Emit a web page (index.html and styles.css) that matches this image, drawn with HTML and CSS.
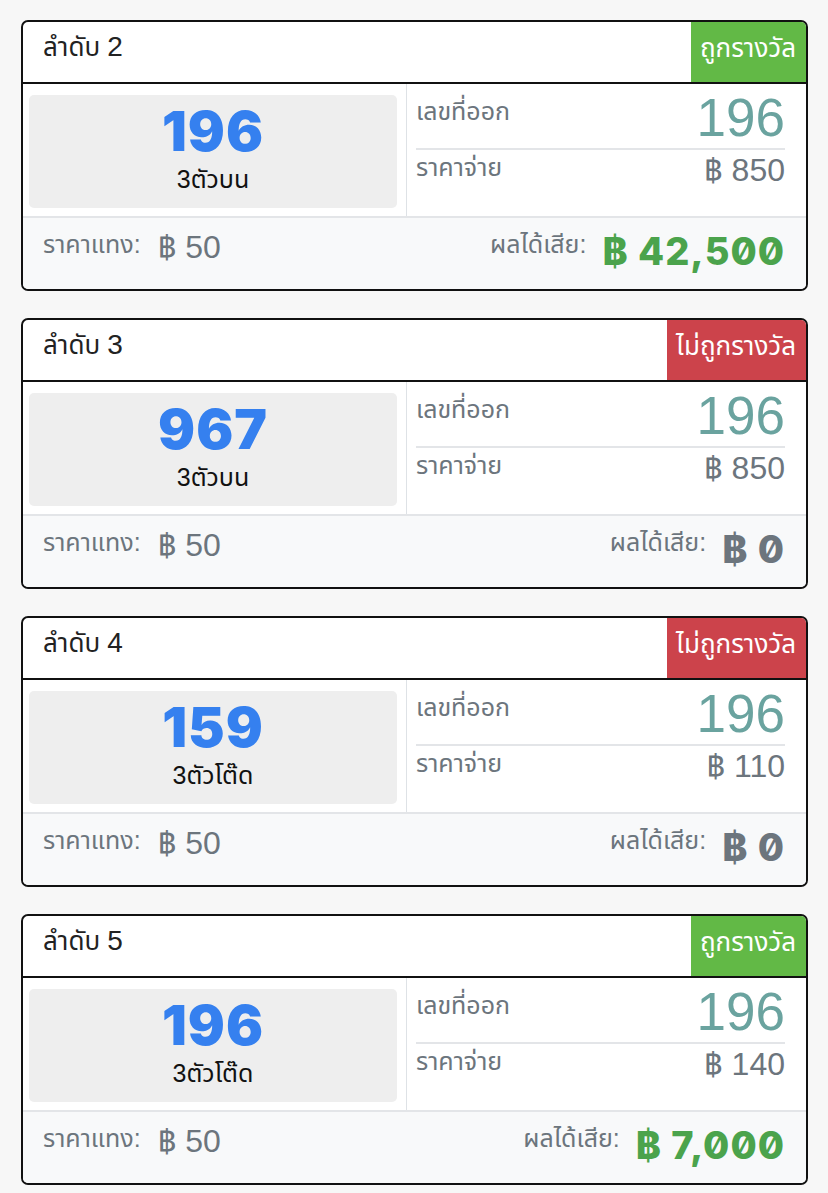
FILE: index.html
```html
<!DOCTYPE html>
<html lang="th">
<head>
    <meta charset="UTF-8">
    <meta name="viewport" content="width=device-width, initial-scale=1.0">
    <title>ผลการแทง</title>
    <link rel="stylesheet" href="styles.css">
</head>
<body>
    <div class="list">
        <div class="bet">
            <div class="bet-head">
                <div class="bet-no">ลำดับ <span class="seq">2</span></div>
                <div class="badge win">ถูกรางวัล</div>
            </div>
            <div class="bet-body">
                <div class="pick">
                    <div class="pick-box">
                        <div class="pick-num">196</div>
                        <div class="pick-type">3ตัวบน</div>
                    </div>
                </div>
                <div class="info">
                    <div class="info-row result">
                        <span class="label">เลขที่ออก</span>
                        <span class="result-num">196</span>
                    </div>
                    <div class="info-row">
                        <span class="label">ราคาจ่าย</span>
                        <span class="money">฿ 850</span>
                    </div>
                </div>
            </div>
            <div class="bet-foot">
                <div class="stake"><span class="label">ราคาแทง:</span><span class="money">฿ 50</span></div>
                <div class="profit"><span class="label">ผลได้เสีย:</span><span class="profit-num plus">฿ 42,500</span></div>
            </div>
        </div>

        <div class="bet">
            <div class="bet-head">
                <div class="bet-no">ลำดับ <span class="seq">3</span></div>
                <div class="badge lose">ไม่ถูกรางวัล</div>
            </div>
            <div class="bet-body">
                <div class="pick">
                    <div class="pick-box">
                        <div class="pick-num">967</div>
                        <div class="pick-type">3ตัวบน</div>
                    </div>
                </div>
                <div class="info">
                    <div class="info-row result">
                        <span class="label">เลขที่ออก</span>
                        <span class="result-num">196</span>
                    </div>
                    <div class="info-row">
                        <span class="label">ราคาจ่าย</span>
                        <span class="money">฿ 850</span>
                    </div>
                </div>
            </div>
            <div class="bet-foot">
                <div class="stake"><span class="label">ราคาแทง:</span><span class="money">฿ 50</span></div>
                <div class="profit"><span class="label">ผลได้เสีย:</span><span class="profit-num">฿ 0</span></div>
            </div>
        </div>

        <div class="bet">
            <div class="bet-head">
                <div class="bet-no">ลำดับ <span class="seq">4</span></div>
                <div class="badge lose">ไม่ถูกรางวัล</div>
            </div>
            <div class="bet-body">
                <div class="pick">
                    <div class="pick-box">
                        <div class="pick-num">159</div>
                        <div class="pick-type">3ตัวโต๊ด</div>
                    </div>
                </div>
                <div class="info">
                    <div class="info-row result">
                        <span class="label">เลขที่ออก</span>
                        <span class="result-num">196</span>
                    </div>
                    <div class="info-row">
                        <span class="label">ราคาจ่าย</span>
                        <span class="money">฿ 110</span>
                    </div>
                </div>
            </div>
            <div class="bet-foot">
                <div class="stake"><span class="label">ราคาแทง:</span><span class="money">฿ 50</span></div>
                <div class="profit"><span class="label">ผลได้เสีย:</span><span class="profit-num">฿ 0</span></div>
            </div>
        </div>

        <div class="bet">
            <div class="bet-head">
                <div class="bet-no">ลำดับ <span class="seq">5</span></div>
                <div class="badge win">ถูกรางวัล</div>
            </div>
            <div class="bet-body">
                <div class="pick">
                    <div class="pick-box">
                        <div class="pick-num">196</div>
                        <div class="pick-type">3ตัวโต๊ด</div>
                    </div>
                </div>
                <div class="info">
                    <div class="info-row result">
                        <span class="label">เลขที่ออก</span>
                        <span class="result-num">196</span>
                    </div>
                    <div class="info-row">
                        <span class="label">ราคาจ่าย</span>
                        <span class="money">฿ 140</span>
                    </div>
                </div>
            </div>
            <div class="bet-foot">
                <div class="stake"><span class="label">ราคาแทง:</span><span class="money">฿ 50</span></div>
                <div class="profit"><span class="label">ผลได้เสีย:</span><span class="profit-num plus">฿ 7,000</span></div>
            </div>
        </div>
    </div>
</body>
</html>
```

FILE: styles.css
```css
body {
    font-family: "Liberation Sans", "Noto Sans Thai", "Noto Sans Thai UI", Kanit, Sarabun, "Noto Sans", sans-serif;
    background-color: #f7f7f7;
    color: #212529;
    margin: 0;
    padding: 20px 20px 0 21px;
}

.bet {
    background-color: #fff;
    border: 2px solid #111;
    border-radius: 7px;
    overflow: hidden;
    margin-bottom: 27px;
}

/* หัวการ์ด: ลำดับ + ป้ายผล */
.bet-head {
    display: flex;
    justify-content: space-between;
    height: 60px;
    border-bottom: 2px solid #111;
}

.bet-no {
    font-size: 26px;
    line-height: 34px;
    padding: 8px 20px 0 20px;
    color: #222;
}

.bet-no .seq {
    font-size: 28px;
}

.badge {
    color: #fff;
    font-size: 26px;
    line-height: 34px;
    padding: 9px 10px 0 9px;
}

.badge.win {
    background-color: #62b946;
}

.badge.lose {
    background-color: #cc434b;
}

.bet-body {
    display: flex;
    height: 132px;
}

.pick {
    width: 384px;
    padding: 11px 9px 8px 6px;
    box-sizing: border-box;
    border-right: 1px solid #dee2e6;
}

.pick-box {
    background-color: #eee;
    border-radius: 5px;
    height: 100%;
    text-align: center;
    padding-top: 6px;
    box-sizing: border-box;
}

.pick-num {
    font-family: Inter, sans-serif;
    font-weight: 900;
    font-size: 55px;
    line-height: 61px;
    letter-spacing: 1px;
    color: #3580ef;
}

.pick-type {
    font-size: 25px;
    line-height: 34px;
    color: #111;
}

.info {
    flex: 1;
    padding: 0 21px 0 9px;
}

.info-row {
    display: flex;
    justify-content: space-between;
    align-items: flex-start;
}

.info-row.result {
    border-bottom: 2px solid #e3e5e8;
    height: 66px;
    padding-top: 6px;
    box-sizing: border-box;
}

.label {
    font-size: 25px;
    line-height: 34px;
    color: #6c757d;
}

.result-num {
    font-size: 53px;
    line-height: 56px;
    color: #6aa39f;
}

.money {
    font-size: 32px;
    line-height: 36px;
    color: #6c757d;
}

.info-row.result .label {
    margin-top: 4px;
}

.info-row .money {
    margin-top: 2px;
}

.bet-foot {
    display: flex;
    justify-content: space-between;
    align-items: flex-start;
    background-color: #f8f9fa;
    border-top: 2px solid #e3e5e8;
    height: 73px;
    padding: 0 21px 0 20px;
    box-sizing: border-box;
}

.stake,
.profit {
    display: flex;
    align-items: flex-start;
}

.stake .label,
.profit .label {
    margin-top: 9px;
}

.stake .money {
    margin: 11px 0 0 17px;
}

.profit-num {
    font-family: Inter, sans-serif;
    font-weight: 800;
    font-size: 38px;
    line-height: 46px;
    letter-spacing: 1px;
    font-feature-settings: "zero";
    color: #6c757d;
    margin: 10px 0 0 16px;
}

.profit-num.plus {
    color: #4ba34c;
}
```
